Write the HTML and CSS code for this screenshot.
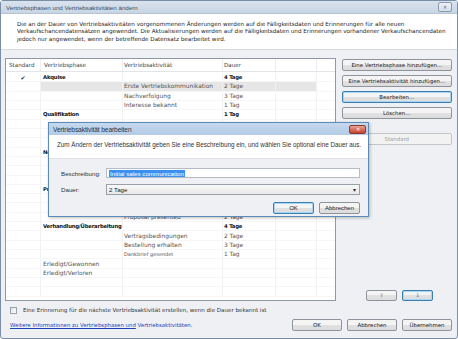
FILE: index.html
```html
<!DOCTYPE html>
<html lang="de">
<head>
  <meta charset="UTF-8" />
  <title>Vertriebsphasen und Vertriebsaktivitäten ändern</title>
  <link rel="stylesheet" href="styles.css">
</head>
<body>
  <div class="window">
    <!-- Title bar -->
    <div class="titlebar">
      <span class="title">Vertriebsphasen und Vertriebsaktivitäten ändern</span>
      <span class="close-btn">&#x2715;</span>
    </div>

    <!-- Intro text -->
    <div class="intro">
      Die an der Dauer von Vertriebsaktivitäten vorgenommenen Änderungen werden auf die Fälligkeitsdaten und Erinnerungen für alle neuen<br>
      Verkaufschancendatensätzen angewendet. Die Aktualisierungen werden auf die Fälligkeitsdaten und Erinnerungen vorhandener Verkaufschancendaten<br>
      jedoch nur angewendet, wenn der betreffende Datensatz bearbeitet wird.
    </div>

    <!-- Main area -->
    <div class="main">
      <div class="grid">
        <div class="grid-head">
          <div>Standard</div>
          <div>Vertriebsphase</div>
          <div>Vertriebsaktivität</div>
          <div>Dauer</div>
          <div></div>
          <div></div>
        </div>
        <div class="grid-body">
          <div class="row phase"><div class="check">&#x2714;</div><div>Akquise</div><div></div><div>4 Tage</div><div></div><div></div></div>
          <div class="row active"><div></div><div></div><div>Erste Vertriebskommunikation</div><div>2 Tage</div><div></div><div></div></div>
          <div class="row"><div></div><div></div><div>Nachverfolgung</div><div>3 Tage</div><div></div><div></div></div>
          <div class="row"><div></div><div></div><div>Interesse bekannt</div><div>1 Tag</div><div></div><div></div></div>
          <div class="row phase"><div></div><div>Qualifikation</div><div></div><div>1 Tag</div><div></div><div></div></div>
          <div class="row"><div></div><div></div><div></div><div></div><div></div><div></div></div>
          <div class="row"><div></div><div></div><div></div><div></div><div></div><div></div></div>
          <div class="row"><div></div><div></div><div></div><div></div><div></div><div></div></div>
          <div class="row phase"><div></div><div>Ne</div><div></div><div></div><div></div><div></div></div>
          <div class="row"><div></div><div></div><div></div><div></div><div></div><div></div></div>
          <div class="row"><div></div><div></div><div></div><div></div><div></div><div></div></div>
          <div class="row"><div></div><div></div><div></div><div></div><div></div><div></div></div>
          <div class="row phase"><div></div><div>Pr</div><div></div><div></div><div></div><div></div></div>
          <div class="row"><div></div><div></div><div></div><div></div><div></div><div></div></div>
          <div class="row"><div></div><div></div><div></div><div></div><div></div><div></div></div>
          <div class="row"><div></div><div></div><div>Proposal presented</div><div>2 Tage</div><div></div><div></div></div>
          <div class="row phase"><div></div><div>Verhandlung/Überarbeitung</div><div></div><div>4 Tage</div><div></div><div></div></div>
          <div class="row"><div></div><div></div><div>Vertragsbedingungen</div><div>2 Tage</div><div></div><div></div></div>
          <div class="row"><div></div><div></div><div>Bestellung erhalten</div><div>3 Tage</div><div></div><div></div></div>
          <div class="row small"><div></div><div></div><div>Dankbrief gesendet</div><div>1 Tag</div><div></div><div></div></div>
          <div class="row"><div></div><div>Erledigt/Gewonnen</div><div></div><div></div><div></div><div></div></div>
          <div class="row"><div></div><div>Erledigt/Verloren</div><div></div><div></div><div></div><div></div></div>
          <div class="row"><div></div><div></div><div></div><div></div><div></div><div></div></div>
          <div class="row"><div></div><div></div><div></div><div></div><div></div><div></div></div>
        </div>
      </div>

      <div class="side">
        <button class="btn">Eine Vertriebsphase hinzufügen...</button>
        <button class="btn">Eine Vertriebsaktivität hinzufügen...</button>
        <button class="btn focused">Bearbeiten...</button>
        <button class="btn">Löschen...</button>
        <button class="btn disabled gap">Standard</button>
        <div class="arrows">
          <button class="btn arrow">&#x21E7;</button>
          <button class="btn arrow focused"><span class="down">&#x21E9;</span></button>
        </div>
      </div>
    </div>

    <!-- Reminder option -->
    <label class="reminder">
      <span class="checkbox"></span>
      Eine Erinnerung für die nächste Vertriebsaktivität erstellen, wenn die Dauer bekannt ist
    </label>

    <!-- Footer -->
    <div class="footer">
      <div class="links">
        <a href="#">Weitere Informationen zu Vertriebsphasen und</a> <a href="#" class="plain">Vertriebsaktivitäten</a>.
      </div>
      <div class="footer-buttons">
        <button class="btn">OK</button>
        <button class="btn">Abbrechen</button>
        <button class="btn">Übernehmen</button>
      </div>
    </div>

    <!-- Edit dialog -->
    <div class="dialog">
      <div class="dialog-title">
        <span>Vertriebsaktivität bearbeiten</span>
        <span class="dialog-close">&#x2715;</span>
      </div>
      <div class="dialog-text">Zum Ändern der Vertriebsaktivität geben Sie eine Beschreibung ein, und wählen Sie optional eine Dauer aus.</div>
      <div class="dialog-form">
        <div class="field">
          <span class="field-label">Beschreibung:</span>
          <div class="input"><span class="selected">Initial sales communication</span></div>
        </div>
        <div class="field">
          <span class="field-label">Dauer:</span>
          <div class="input select"><span>2 Tage</span><span class="caret">&#x25BE;</span></div>
        </div>
        <div class="dialog-buttons">
          <button class="btn focused">OK</button>
          <button class="btn">Abbrechen</button>
        </div>
      </div>
    </div>
  </div>
</body>
</html>
```

FILE: styles.css
```css
* {
  margin: 0;
  padding: 0;
  box-sizing: border-box;
}

body {
  width: 458px;
  height: 339px;
  overflow: hidden;
  background-color: #ffffff;
  font-family: 'DejaVu Sans', Tahoma, sans-serif;
  font-size: 5.4px;
  color: #222;
}

.window {
  position: relative;
  width: 458px;
  height: 339px;
  background-color: #eef0f3;
  border: 1px solid #7b8ea6;
  border-radius: 3px;
  display: flex;
  flex-direction: column;
}

.titlebar {
  height: 13px;
  display: flex;
  align-items: center;
  justify-content: space-between;
  padding: 0 5px;
  background: linear-gradient(#d9e3ee, #c8d5e3);
  border-bottom: 1px solid #b5c3d3;
}

.title {
  font-family: 'Liberation Sans', Arial, sans-serif;
  font-size: 6.2px;
  color: #3b4f69;
}

.close-btn {
  width: 14px;
  height: 10px;
  border: 1px solid #8a9ab0;
  border-radius: 2px;
  background: linear-gradient(#eef2f7, #d5dde8);
  font-size: 5px;
  color: #667;
  display: flex;
  align-items: center;
  justify-content: center;
}

.intro {
  background-color: #ffffff;
  padding: 7px 16px 6px;
  line-height: 7.3px;
  font-size: 5.65px;
  white-space: nowrap;
  border-bottom: 1px solid #d6dbe2;
}

.main {
  display: flex;
  gap: 6px;
  padding: 8px 5px 0 4px;
}

.grid {
  width: 332px;
  height: 243px;
  background-color: #ffffff;
  border: 1px solid #8e98a6;
  overflow: hidden;
}

.grid-head,
.row {
  display: grid;
  grid-template-columns: 35px 82px 100px 53px 41px 19px;
}

.grid-head {
  height: 13px;
  align-items: center;
  border-bottom: 1px solid #e2e4e8;
  color: #444;
  font-size: 5.6px;
}

.grid-head > div {
  padding-left: 3px;
  border-right: 1px solid #eceef1;
  height: 100%;
  display: flex;
  align-items: center;
}

.grid-head > div:nth-child(n+3) {
  padding-left: 1px;
}

.grid-body {
  padding-top: 1px;
}

.row {
  height: 9.33px;
  align-items: center;
  color: #555;
  font-size: 5.9px;
}

.row > div {
  height: 100%;
  padding-left: 1px;
  display: flex;
  align-items: center;
  border-right: 1px solid #f0f1f3;
  border-bottom: 1px solid #f6f6f7;
  white-space: nowrap;
}

.row > div:nth-child(2) {
  padding-left: 2px;
}

.row.phase {
  font-weight: bold;
  color: #111;
  font-size: 5.3px;
  letter-spacing: -0.2px;
}

.row.active > div:nth-child(n+2):nth-child(-n+5) {
  background-color: #e6e6e6;
}

.row.small > div:nth-child(3) {
  font-size: 5px;
}

.check {
  justify-content: center;
  padding-left: 0 !important;
  font-size: 6px;
  color: #333;
}

.side {
  width: 111px;
  height: 243px;
  display: flex;
  flex-direction: column;
  gap: 4px;
  padding-top: 1px;
}

.btn {
  height: 12px;
  border: 1px solid #8f949c;
  border-radius: 2px;
  background: linear-gradient(#f4f4f4 50%, #e1e1e1 50%, #dcdcdc);
  font-family: 'DejaVu Sans', Tahoma, sans-serif;
  font-size: 5.4px;
  color: #222;
}

.btn.focused {
  border-color: #3c7fb1;
  box-shadow: inset 0 0 0 1px #a7d5f2;
}

.btn.disabled {
  color: #a0a0a0;
  border-color: #c2c5ca;
  background: #f2f2f2;
}

.btn.gap {
  margin-top: 10px;
}

.arrows {
  margin-top: auto;
  display: flex;
  justify-content: flex-end;
  gap: 5px;
  padding-right: 19px;
}

.btn.arrow {
  width: 31px;
  height: 11px;
  font-size: 5px;
  color: #666;
}

.btn.arrow .down {
  color: #2a5ca8;
}

.reminder {
  display: flex;
  align-items: center;
  gap: 6px;
  padding: 6px 0 0 9px;
  font-size: 5.55px;
  color: #333;
}

.checkbox {
  width: 7px;
  height: 7px;
  border: 1px solid #9aa1aa;
  background: linear-gradient(135deg, #dfe2e6, #ffffff);
}

.footer {
  display: flex;
  align-items: center;
  justify-content: space-between;
  padding: 5px 5px 0 9px;
}

.links a {
  color: #1d3fb8;
  text-decoration: underline;
}

.links a.plain {
  text-decoration: none;
}

.footer-buttons {
  display: flex;
  gap: 5px;
}

.footer-buttons .btn {
  width: 50px;
}

/* Edit dialog */
.dialog {
  position: absolute;
  left: 47px;
  top: 121px;
  width: 321px;
  height: 95px;
  border: 1px solid #5d8bb8;
  background-color: #eef0f3;
  box-shadow: 1px 1px 3px rgba(0, 0, 0, 0.25);
  display: flex;
  flex-direction: column;
}

.dialog-title {
  height: 12px;
  display: flex;
  align-items: center;
  justify-content: space-between;
  padding: 0 2px 0 4px;
  background: linear-gradient(#c5d8ee, #b3cbe6);
  font-family: 'Liberation Sans', Arial, sans-serif;
  font-size: 6.6px;
  letter-spacing: -0.1px;
  color: #1c3350;
}

.dialog-close {
  width: 17px;
  height: 9px;
  border-radius: 2px;
  background: linear-gradient(#e9a192, #c7402c);
  border: 1px solid #8c3a2e;
  color: #fff;
  font-size: 5px;
  display: flex;
  align-items: center;
  justify-content: center;
}

.dialog-text {
  background-color: #ffffff;
  height: 23px;
  padding: 6px 0 0 8px;
  font-family: 'Liberation Sans', Arial, sans-serif;
  font-size: 6.3px;
  color: #333;
  white-space: nowrap;
}

.dialog-form {
  flex: 1;
  display: flex;
  flex-direction: column;
  gap: 6px;
  padding: 9px 8px 0 12px;
  border-top: 1px solid #dde1e6;
}

.field {
  display: flex;
  align-items: center;
}

.field-label {
  width: 45px;
  font-family: 'Liberation Sans', Arial, sans-serif;
  font-size: 6.2px;
  color: #333;
}

.input {
  flex: 1;
  height: 10px;
  background-color: #ffffff;
  border: 1px solid #b5bcc6;
  display: flex;
  align-items: center;
  padding-left: 2px;
  font-family: 'Liberation Sans', Arial, sans-serif;
  font-size: 6.2px;
}

.selected {
  background-color: #3b8ff0;
  color: #ffffff;
  padding: 0 1px;
}

.input.select {
  height: 11px;
  justify-content: space-between;
  background: linear-gradient(#f9f9f9, #e8e8e8);
  border-color: #9aa0a8;
}

.caret {
  width: 10px;
  text-align: center;
  font-size: 6px;
  color: #333;
}

.dialog-buttons {
  display: flex;
  justify-content: flex-end;
  gap: 5px;
  margin-top: 1px;
}

.dialog-buttons .btn {
  width: 41px;
  height: 12px;
  font-family: 'Liberation Sans', Arial, sans-serif;
  font-size: 6px;
}
```
